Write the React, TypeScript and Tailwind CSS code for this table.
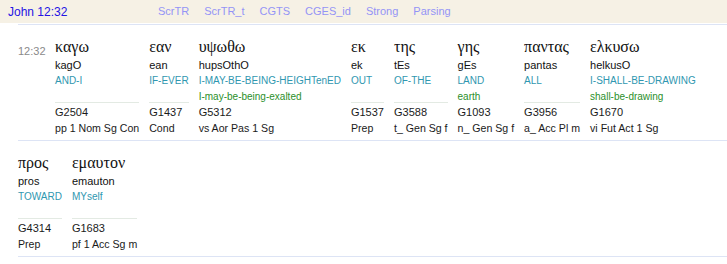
type Word = {
  greek: string;
  translit: string;
  gloss: string;
  gloss2?: string;
  strong: string;
  parse: string;
};

const row1: Word[] = [
  { greek: 'καγω', translit: 'kagO', gloss: 'AND-I', strong: 'G2504', parse: 'pp 1 Nom Sg Con' },
  { greek: 'εαν', translit: 'ean', gloss: 'IF-EVER', strong: 'G1437', parse: 'Cond' },
  {
    greek: 'υψωθω',
    translit: 'hupsOthO',
    gloss: 'I-MAY-BE-BEING-HEIGHTenED',
    gloss2: 'I-may-be-being-exalted',
    strong: 'G5312',
    parse: 'vs Aor Pas 1 Sg',
  },
  { greek: 'εκ', translit: 'ek', gloss: 'OUT', strong: 'G1537', parse: 'Prep' },
  { greek: 'της', translit: 'tEs', gloss: 'OF-THE', strong: 'G3588', parse: 't_ Gen Sg f' },
  { greek: 'γης', translit: 'gEs', gloss: 'LAND', gloss2: 'earth', strong: 'G1093', parse: 'n_ Gen Sg f' },
  { greek: 'παντας', translit: 'pantas', gloss: 'ALL', strong: 'G3956', parse: 'a_ Acc Pl m' },
  {
    greek: 'ελκυσω',
    translit: 'helkusO',
    gloss: 'I-SHALL-BE-DRAWING',
    gloss2: 'shall-be-drawing',
    strong: 'G1670',
    parse: 'vi Fut Act 1 Sg',
  },
];

const row2: Word[] = [
  { greek: 'προς', translit: 'pros', gloss: 'TOWARD', strong: 'G4314', parse: 'Prep' },
  { greek: 'εμαυτον', translit: 'emauton', gloss: 'MYself', strong: 'G1683', parse: 'pf 1 Acc Sg m' },
];

const links = ['ScrTR', 'ScrTR_t', 'CGTS', 'CGES_id', 'Strong', 'Parsing'];

function WordCell({ w }: { w: Word }) {
  return (
    <div className="flex flex-col">
      <div className="h-[21px] whitespace-nowrap font-['Liberation_Serif',serif] text-[16px] leading-[21px] text-[#111]">
        {w.greek}
      </div>
      <div className="whitespace-nowrap leading-4 text-[#111]">{w.translit}</div>
      <div className="whitespace-nowrap text-[10px] leading-4 text-[#2f97b0]">{w.gloss}</div>
      <div className="h-[13px] whitespace-nowrap text-[10px] leading-4 text-[#2b8f2b]">{w.gloss2}</div>
      <div className={w.gloss2 ? 'h-px' : 'h-px bg-[#e3eae3]'} />
      <div className="mt-px whitespace-nowrap leading-4 text-[#1a1a1a]">{w.strong}</div>
      <div className="whitespace-nowrap text-[10.6px] leading-4 text-[#1a1a1a]">{w.parse}</div>
    </div>
  );
}

export default function App() {
  return (
    <div className="h-[264px] w-[727px] overflow-hidden bg-white font-['Liberation_Sans',Arial,sans-serif] text-[11px]">
      <header className="flex h-[23px] items-center bg-[#f6f1e5] pl-2">
        <div className="w-[150px] text-[12px] text-[#2414e4]">John 12:32</div>
        <nav className="flex gap-[15px] text-[#9494f6]">
          {links.map((l) => (
            <span key={l}>{l}</span>
          ))}
        </nav>
      </header>

      <section className="ml-[18px] mt-px border-t border-[#dde4f5]">
        <div className="flex gap-x-[10px] border-b border-[#dde4f5] pb-[4px] pt-[11px]">
          <div className="w-[27px] pt-[7px] leading-4 text-[#8a8a8a]">12:32</div>
          {row1.map((w) => (
            <WordCell key={w.strong} w={w} />
          ))}
        </div>
        <div className="flex gap-x-[10px] border-b border-[#dde4f5] pb-[4px] pt-[11px]">
          {row2.map((w) => (
            <WordCell key={w.strong} w={w} />
          ))}
        </div>
      </section>
    </div>
  );
}
